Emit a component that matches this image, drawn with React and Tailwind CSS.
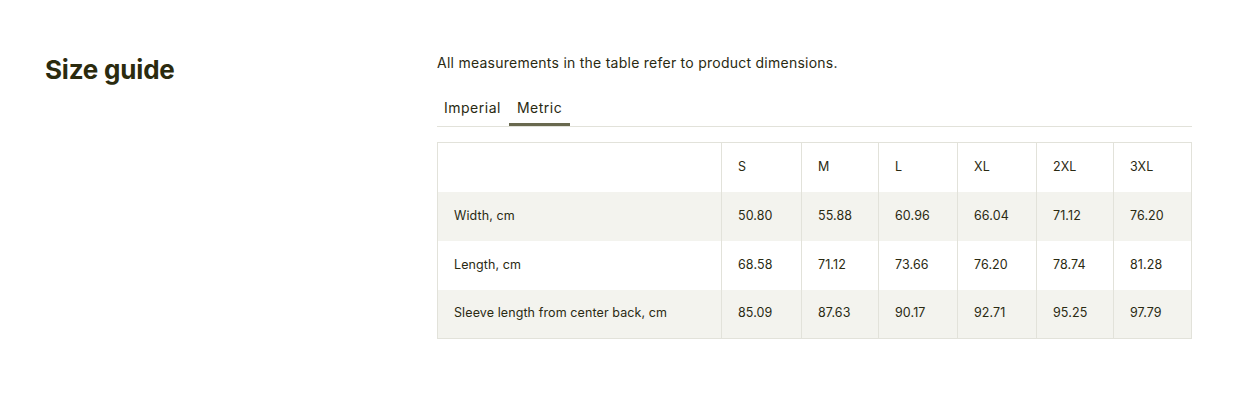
const sizes = ["S", "M", "L", "XL", "2XL", "3XL"];
const rows = [
  ["Width, cm", ["50.80", "55.88", "60.96", "66.04", "71.12", "76.20"]],
  ["Length, cm", ["68.58", "71.12", "73.66", "76.20", "78.74", "81.28"]],
  ["Sleeve length from center back, cm", ["85.09", "87.63", "90.17", "92.71", "95.25", "97.79"]],
];
const colW = ["w-[284px]", "w-[80px]", "w-[77px]", "w-[79px]", "w-[79px]", "w-[77px]", "w-[78px]"];

export default function App() {
  return (
    <div className="w-[1255px] h-[396px] bg-white flex text-[#2a2a12] font-['Inter',sans-serif]">
      <div className="w-[437px] pl-[45px] pt-[50px]">
        <h2 className="text-[26px] font-bold tracking-[-0.2px] text-[#2b2b0f]">Size guide</h2>
      </div>
      <div className="w-[755px] pt-[52px]">
        <p className="text-[14px] tracking-[0.25px]">All measurements in the table refer to product dimensions.</p>
        <div className="mt-[20px] flex border-b border-[#e2e2da] text-[14px] tracking-[0.5px]">
          <button className="px-[7px] pb-[8px] pt-[4px]">Imperial</button>
          <button className="ml-[1px] px-[8px] pb-[5px] pt-[4px] border-b-[3px] border-[#69694f]">Metric</button>
        </div>
        <table className="mt-[15px] w-[755px] border border-[#e2e2da] border-collapse text-[12.5px] tracking-[0.1px]">
          <thead>
            <tr className="h-[49px]">
              <th className={`${colW[0]} border-r border-[#e2e2da]`}></th>
              {sizes.map((s, i) => (
                <th key={s} className={`${colW[i + 1]} border-r border-[#e2e2da] text-left font-normal pl-4`}>{s}</th>
              ))}
            </tr>
          </thead>
          <tbody>
            {rows.map(([label, vals], r) => (
              <tr key={label} className={`h-[49px] ${r % 2 === 0 ? "bg-[#f3f3ee]" : "bg-white"}`}>
                <td className="border-r border-[#e2e2da] pl-4">{label}</td>
                {vals.map((v, i) => (
                  <td key={i} className="border-r border-[#e2e2da] pl-4">{v}</td>
                ))}
              </tr>
            ))}
          </tbody>
        </table>
      </div>
    </div>
  );
}
